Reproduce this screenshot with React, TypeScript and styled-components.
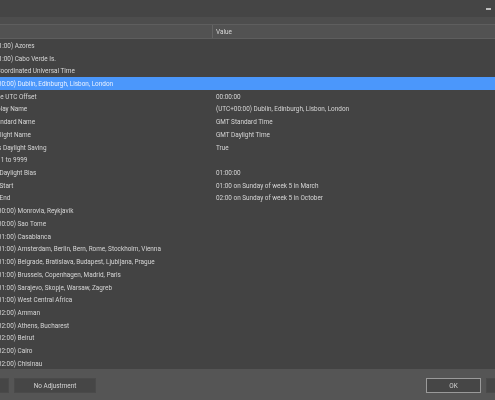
import React from "react";
import styled, { createGlobalStyle } from "styled-components";

const Global = createGlobalStyle`
  html, body { margin: 0; padding: 0; background: #434343; }
  body { width: 495px; height: 400px; overflow: hidden; }
  #root { height: 400px; }
`;

const Dialog = styled.div`
  width: 495px;
  height: 400px;
  display: flex;
  flex-direction: column;
  overflow: hidden;
  background: #434343;
  color: #d6d6d6;
  font-family: Roboto, "Liberation Sans", Arial, sans-serif;
  font-size: 6.4px;
  filter: blur(0.25px);
`;

const TitleBar = styled.div`
  height: 17px;
  flex: none;
  display: flex;
  justify-content: flex-end;
  align-items: center;
  padding-right: 4px;
  background: #454545;
`;

const MinimizeIcon = styled.span`
  width: 5px;
  height: 2px;
  background: #bdbdbd;
  margin-top: 1px;
`;

const Strip = styled.div`
  height: 7px;
  flex: none;
  background: #4d4d4d;
`;

const Header = styled.div`
  height: 15px;
  flex: none;
  display: grid;
  grid-template-columns: 212px 1fr;
  background: #525252;
  border-top: 1px solid #5e5e5e;
  border-bottom: 1px solid #5e5e5e;
  box-sizing: border-box;
`;

const HeaderCell = styled.div`
  display: flex;
  align-items: center;
  padding-left: 3px;
  border-left: 1px solid #646464;
  &:first-child { border-left: 0; }
`;

const List = styled.div`
  flex: 1;
  min-height: 0;
  overflow: hidden;
  background: #434343;
`;

const Row = styled.div<{ $selected?: boolean }>`
  height: 12.72px;
  box-sizing: border-box;
  padding-top: 1px;
  display: grid;
  grid-template-columns: 212px 1fr;
  align-items: center;
  white-space: nowrap;
  background: ${(p) => (p.$selected ? "#4b97fb" : "transparent")};
  color: ${(p) => (p.$selected ? "#e8f0ff" : "#d6d6d6")};
`;

const Name = styled.div<{ $shift: number }>`
  margin-left: ${(p) => p.$shift}px;
`;

const Value = styled.div`
  padding-left: 4px;
`;

const Footer = styled.div`
  height: 31px;
  flex: none;
  box-sizing: border-box;
  padding-top: 9px;
  display: flex;
  gap: 5px;
  background: #555555;
  margin: 0 -60px;
`;

const Button = styled.button<{ $w: number; $primary?: boolean }>`
  width: ${(p) => p.$w}px;
  height: 15px;
  flex: none;
  box-sizing: border-box;
  padding: 0;
  background: #464646;
  border: 1px solid ${(p) => (p.$primary ? "#9a9a9a" : "#4a4a4a")};
  color: #d6d6d6;
  font: inherit;
`;

const Spacer = styled.div`
  flex: 1;
`;

const rows: { name: string; value?: string; shift: number; selected?: boolean }[] = [
  { name: "(UTC-01:00) Azores", shift: -21 },
  { name: "(UTC-01:00) Cabo Verde Is.", shift: -21 },
  { name: "(UTC) Coordinated Universal Time", shift: -21.5 },
  { name: "(UTC+00:00) Dublin, Edinburgh, Lisbon, London", shift: -20, selected: true },
  { name: "Base UTC Offset", value: "00:00:00", shift: -10.4 },
  { name: "Display Name", value: "(UTC+00:00) Dublin, Edinburgh, Lisbon, London", shift: -12 },
  { name: "Standard Name", value: "GMT Standard Time", shift: -9.2 },
  { name: "Daylight Name", value: "GMT Daylight Time", shift: -10.6 },
  { name: "Supports Daylight Saving", value: "True", shift: -24.5 },
  { name: "Year 1 to 9999", shift: -13.6 },
  { name: "Daylight Bias", value: "01:00:00", shift: -0.5 },
  { name: "Start", value: "01:00 on Sunday of week 5 in March", shift: -0.5 },
  { name: "End", value: "02:00 on Sunday of week 5 in October", shift: -0.5 },
  { name: "(UTC+00:00) Monrovia, Reykjavik", shift: -20 },
  { name: "(UTC+00:00) Sao Tome", shift: -20 },
  { name: "(UTC+01:00) Casablanca", shift: -20 },
  { name: "(UTC+01:00) Amsterdam, Berlin, Bern, Rome, Stockholm, Vienna", shift: -20 },
  { name: "(UTC+01:00) Belgrade, Bratislava, Budapest, Ljubljana, Prague", shift: -20 },
  { name: "(UTC+01:00) Brussels, Copenhagen, Madrid, Paris", shift: -20 },
  { name: "(UTC+01:00) Sarajevo, Skopje, Warsaw, Zagreb", shift: -20 },
  { name: "(UTC+01:00) West Central Africa", shift: -20 },
  { name: "(UTC+02:00) Amman", shift: -20 },
  { name: "(UTC+02:00) Athens, Bucharest", shift: -20 },
  { name: "(UTC+02:00) Beirut", shift: -20 },
  { name: "(UTC+02:00) Cairo", shift: -20 },
  { name: "(UTC+02:00) Chisinau", shift: -20 },
];

export default function App() {
  return (
    <Dialog>
      <Global />
      <TitleBar>
        <MinimizeIcon />
      </TitleBar>
      <Strip />
      <Header>
        <HeaderCell />
        <HeaderCell>Value</HeaderCell>
      </Header>
      <List>
        {rows.map((r) => (
          <Row key={r.name} $selected={r.selected}>
            <Name $shift={r.shift}>{r.name}</Name>
            <Value>{r.value}</Value>
          </Row>
        ))}
      </List>
      <Footer>
        <Button $w={69} />
        <Button $w={82}>No Adjustment</Button>
        <Spacer />
        <Button $w={55} $primary>OK</Button>
        <Button $w={69} />
      </Footer>
    </Dialog>
  );
}
